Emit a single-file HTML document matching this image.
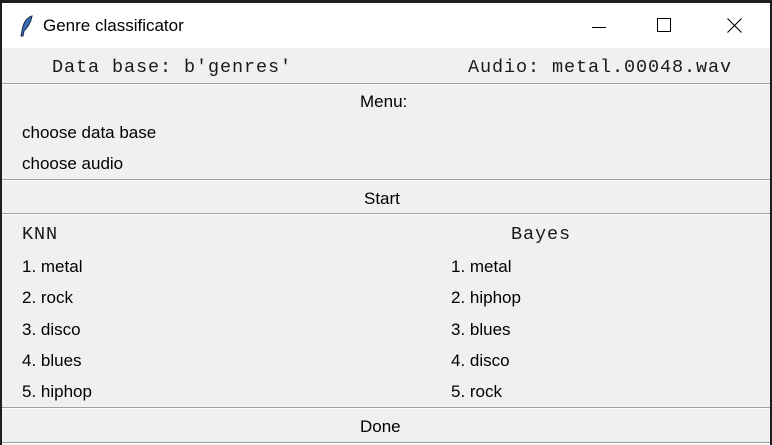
<!DOCTYPE html>
<html><head><style>
*{margin:0;padding:0;box-sizing:border-box}
body{width:772px;height:445px;background:#1e1e1e;position:relative;overflow:hidden;font-family:"Liberation Sans",sans-serif;color:#000}
#win{position:absolute;left:2px;top:3px;width:768px;height:442px;background:#f0f0f0}
#title{position:absolute;left:0;top:0;width:768px;height:45px;background:#fff}
.t{position:absolute;white-space:nowrap;font-size:17px;line-height:20px}
.m{font-family:"Liberation Mono",monospace;font-size:18.5px;letter-spacing:0.9px;line-height:20px;color:#1a1a1a}
.sep{position:absolute;left:0;width:768px;height:2px;border-top:1px solid #a0a0a0;border-bottom:1px solid #fff}
</style></head><body>
<div id="win">
<div id="title">
<svg style="position:absolute;left:18px;top:12px" width="14" height="22" viewBox="0 0 14 22"><path d="M12 1 C6 3 3 9 2 16 L1 21 L3 21 L4 16 C8 12 11 7 12 1Z" fill="#3b6fb8" stroke="#1a2a4a" stroke-width="1"/></svg>
<div class="t" style="left:41px;top:13px;font-size:17px">Genre classificator</div>
<div style="position:absolute;left:590px;top:24px;width:14px;height:1px;background:#000"></div>
<div style="position:absolute;left:655px;top:15px;width:14px;height:14px;border:1px solid #000"></div>
<svg style="position:absolute;left:725px;top:15px" width="15" height="15"><path d="M0.5 0.5L14.5 14.5M14.5 0.5L0.5 14.5" stroke="#000" stroke-width="1.1"/></svg>
</div>
<div class="t m" style="left:50px;top:55px">Data base: b'genres'</div>
<div class="t m" style="left:466px;top:55px">Audio: metal.00048.wav</div>
<div class="sep" style="top:80px"></div>
<div class="t" style="left:358px;top:89px">Menu:</div>
<div class="t" style="left:20px;top:120px">choose data base</div>
<div class="t" style="left:20px;top:151px">choose audio</div>
<div class="sep" style="top:176px"></div>
<div class="t" style="left:362px;top:186px">Start</div>
<div class="sep" style="top:210px"></div>
<div class="t m" style="left:20px;top:222px">KNN</div>
<div class="t m" style="left:509px;top:222px">Bayes</div>
<div class="t" style="left:20px;top:254px">1. metal</div>
<div class="t" style="left:20px;top:285px">2. rock</div>
<div class="t" style="left:20px;top:317px">3. disco</div>
<div class="t" style="left:20px;top:348px">4. blues</div>
<div class="t" style="left:20px;top:379px">5. hiphop</div>
<div class="t" style="left:449px;top:254px">1. metal</div>
<div class="t" style="left:449px;top:285px">2. hiphop</div>
<div class="t" style="left:449px;top:317px">3. blues</div>
<div class="t" style="left:449px;top:348px">4. disco</div>
<div class="t" style="left:449px;top:379px">5. rock</div>
<div class="sep" style="top:404px"></div>
<div class="t" style="left:358px;top:414px">Done</div>
<div class="sep" style="top:439px"></div>
</div>
</body></html>
